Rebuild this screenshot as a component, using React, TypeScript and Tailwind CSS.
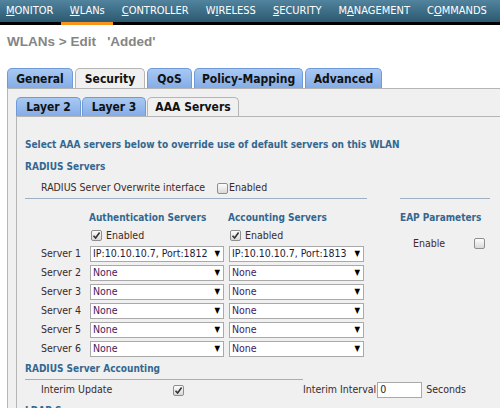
import React from "react";

const navItems: { pre: string; key: string; post: string; active?: boolean }[] = [
  { pre: "", key: "M", post: "ONITOR" },
  { pre: "", key: "W", post: "LANs", active: true },
  { pre: "", key: "C", post: "ONTROLLER" },
  { pre: "W", key: "I", post: "RELESS" },
  { pre: "", key: "S", post: "ECURITY" },
  { pre: "M", key: "A", post: "NAGEMENT" },
  { pre: "C", key: "O", post: "MMANDS" },
];

const mainTabs = [
  { label: "General", w: "w-[66px]" },
  { label: "Security", w: "w-[70px]", active: true },
  { label: "QoS", w: "w-[45px]" },
  { label: "Policy-Mapping", w: "w-[109px]" },
  { label: "Advanced", w: "w-[77px]" },
];

const subTabs = [
  { label: "Layer 2", w: "w-[65px]" },
  { label: "Layer 3", w: "w-[64px]" },
  { label: "AAA Servers", w: "w-[92px]", active: true },
];

const Check = ({ checked }: { checked?: boolean }) => (
  <span className="inline-flex w-[11px] h-[11px] shrink-0 items-center justify-center rounded-[2px] border border-[#8e8e8e] bg-linear-to-b from-[#fdfdfd] to-[#d9d9d9]">
    {checked && (
      <svg width="9" height="9" viewBox="0 0 9 9">
        <path d="M1.5 4.8 L3.6 7 L7.6 1.6" fill="none" stroke="#333" strokeWidth="1.6" />
      </svg>
    )}
  </span>
);

const Select = ({ value, w, ip }: { value: string; w: string; ip?: boolean }) => (
  <div className={`${w} h-[16px] shrink-0 flex items-center justify-between bg-white border border-[#a9a9a9] pl-[2px] pr-[3px]`}>
    <span className={ip ? "text-[#1c1c3c]" : "text-[#45205e]"}>{value}</span>
    <span className="text-[8px] text-black leading-none">▼</span>
  </div>
);

const Tab = ({ label, w, active, h }: { label: string; w: string; active?: boolean; h: string }) => (
  <div
    className={`${w} ${h} flex items-center justify-center rounded-t-[5px] border border-b-0 font-bold text-[#111] ${
      active
        ? "bg-[#f0f0f0] border-[#b5b5b5] relative -mb-px z-10"
        : "bg-linear-to-b from-[#a9c9f2] to-[#84ace6] border-[#6e9bd8]"
    }`}
  >
    {label}
  </div>
);

export default function App() {
  const servers = [
    { n: 1, a: "IP:10.10.10.7, Port:1812", b: "IP:10.10.10.7, Port:1813" },
    { n: 2, a: "None", b: "None" },
    { n: 3, a: "None", b: "None" },
    { n: 4, a: "None", b: "None" },
    { n: 5, a: "None", b: "None" },
    { n: 6, a: "None", b: "None" },
  ];

  return (
    <div className="w-[500px] h-[408px] overflow-hidden bg-white whitespace-nowrap font-['DejaVu_Sans_Condensed','DejaVu_Sans',sans-serif] text-[10.5px]">
      {/* top menu */}
      <div className="h-[25px] flex items-stretch bg-linear-to-b from-[#52849f] to-[#2b5970] border-b-[3px] border-black text-white text-[11px] pl-[-2px]">
        {navItems.map((n, i) => (
          <div
            key={n.key + n.post}
            className={`flex items-center ${i === 0 ? "pl-[6px] pr-[8px]" : "px-[8.5px]"} ${
              n.active ? "border-b-[3px] border-[#f7941d] -mb-[3px]" : ""
            }`}
          >
            {n.pre}
            <span className="underline">{n.key}</span>
            {n.post}
          </div>
        ))}
      </div>

      <div className="pl-[7px] pt-[8px] leading-[18px] font-['Liberation_Sans',sans-serif] font-bold text-[13.5px] text-[#858585] whitespace-pre">
        {"WLANs > Edit   'Added'"}
      </div>

      {/* main tabs */}
      <div className="mt-[17px] pl-[7px] flex gap-[2px] text-[12px]">
        {mainTabs.map((t) => (
          <Tab key={t.label} {...t} h="h-[20px]" />
        ))}
      </div>
      <div className="ml-[7px] border-l border-t border-[#b5b5b5] bg-[#f0f0f0] pl-[8px] pt-[8px] h-[400px]">
        <div className="flex gap-[1px] text-[12px]">
          {subTabs.map((t) => (
            <Tab key={t.label} {...t} h="h-[19px]" />
          ))}
        </div>
        <div className="border-l border-t border-[#b5b5b5] pl-[8px] pt-[17px] h-[400px]">
          <div className="leading-[22px] font-bold text-[10px] text-[#33678f]">
            Select AAA servers below to override use of default servers on this WLAN
          </div>
          <div className="leading-[22px] font-bold text-[10px] text-[#33678f]">RADIUS Servers</div>

          <div className="flex text-[#3a2a2a]">
            <div className="w-[342px] h-[21px] border-b border-[#9fb0c3] flex items-center">
              <span className="pl-[16px] w-[192px] shrink-0">RADIUS Server Overwrite interface</span>
              <Check />
              <span className="ml-[1px]">Enabled</span>
            </div>
            <div className="ml-[33px] w-[90px] h-[21px] border-b border-[#9fb0c3]" />
          </div>

          <div className="flex mt-[9px]">
            <div className="w-[342px] shrink-0">
              <div className="h-[19px] flex items-center font-bold text-[10px] text-[#33678f]">
                <span className="ml-[64px] w-[139px] shrink-0">Authentication Servers</span>
                <span>Accounting Servers</span>
              </div>
              <div className="h-[17px] flex items-center text-[#3a2a2a]">
                <span className="ml-[66px] w-[139px] shrink-0 flex items-center gap-[4px]">
                  <Check checked />
                  Enabled
                </span>
                <span className="flex items-center gap-[4px]">
                  <Check checked />
                  Enabled
                </span>
              </div>
              {servers.map((s) => (
                <div key={s.n} className="h-[19px] flex items-center text-[#3a2a2a]">
                  <span className="pl-[16px] w-[65px] shrink-0">Server {s.n}</span>
                  <Select value={s.a} w="w-[134px]" ip={s.n === 1} />
                  <span className="w-[5px] shrink-0" />
                  <Select value={s.b} w="w-[135px]" ip={s.n === 1} />
                </div>
              ))}
            </div>
            <div className="ml-[33px] w-[90px] shrink-0">
              <div className="h-[19px] flex items-center font-bold text-[10px] text-[#33678f]">EAP Parameters</div>
              <div className="h-[33px] flex items-center text-[#4a2626]">
                <span className="pl-[13px] w-[74px] shrink-0">Enable</span>
                <Check />
              </div>
            </div>
          </div>

          <div className="w-[278px] h-[22px] border-b border-[#9fb0c3] flex items-center font-bold text-[10px] text-[#33678f]">
            RADIUS Server Accounting
          </div>
          <div className="h-[20px] flex items-center text-[#3a2a2a]">
            <span className="pl-[16px] w-[148px] shrink-0">Interim Update</span>
            <Check checked />
            <span className="ml-[119px] shrink-0">Interim Interval</span>
            <div className="ml-[1px] w-[45px] h-[16px] shrink-0 bg-white border border-[#a9a9a9] flex items-center pl-[2px] text-[#222]">
              0
            </div>
            <span className="ml-[4px]">Seconds</span>
          </div>
          <div className="h-[20px] flex items-center font-bold text-[10px] text-[#33678f]">LDAP Servers</div>
        </div>
      </div>
    </div>
  );
}
